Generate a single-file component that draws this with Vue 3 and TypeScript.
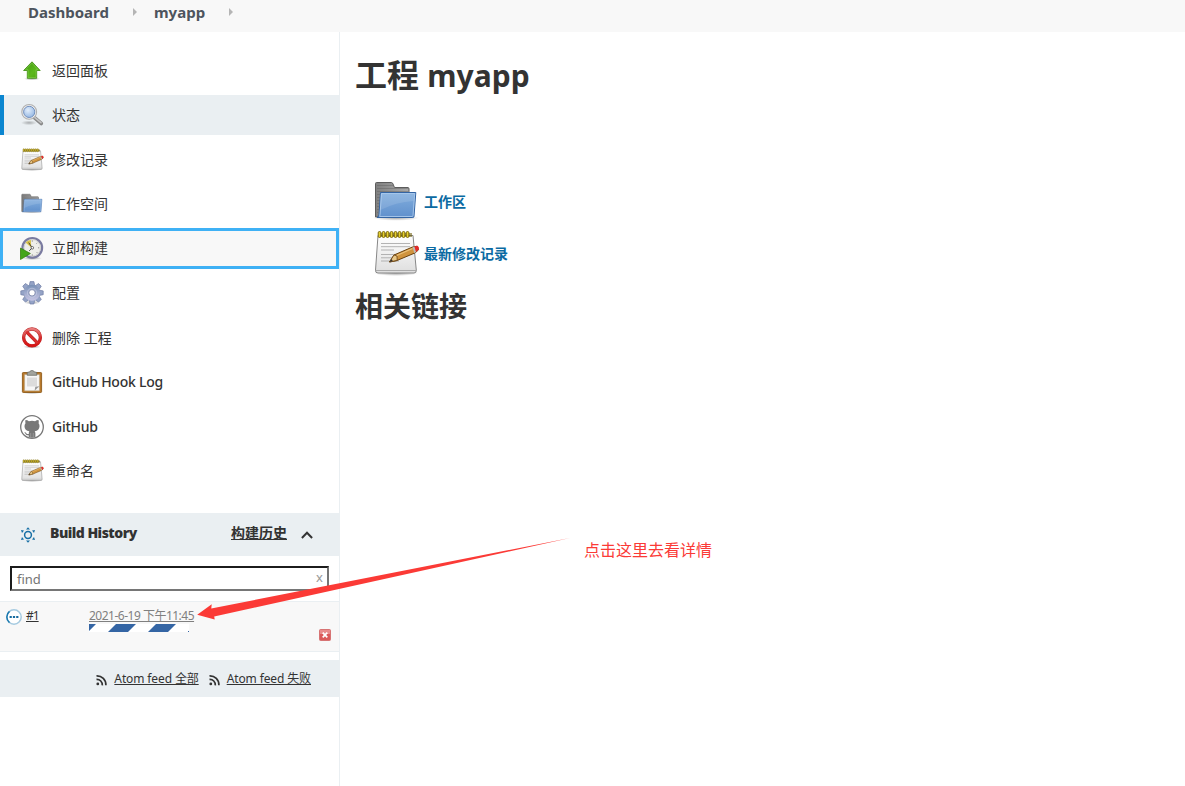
<script setup lang="ts">
interface Task {
  label: string
  icon: string
  state?: 'active' | 'focused'
  latin?: boolean
}

const crumbs: string[] = ['Dashboard', 'myapp']

const tasks: Task[] = [
  { label: '返回面板', icon: 'up' },
  { label: '状态', icon: 'search', state: 'active' },
  { label: '修改记录', icon: 'notepad' },
  { label: '工作空间', icon: 'folder' },
  { label: '立即构建', icon: 'clock', state: 'focused' },
  { label: '配置', icon: 'gear' },
  { label: '删除 工程', icon: 'delete' },
  { label: 'GitHub Hook Log', icon: 'clipboard', latin: true },
  { label: 'GitHub', icon: 'github', latin: true },
  { label: '重命名', icon: 'notepad' },
]

const links = [
  { label: '工作区', icon: 'folder' },
  { label: '最新修改记录', icon: 'notepad' },
]

const feeds: string[] = ['全部', '失败']
const teeth: number[] = [0, 45, 90, 135, 180, 225, 270, 315]
</script>

<template>
  <div class="page">
    <svg class="defs" aria-hidden="true">
      <defs>
        <linearGradient id="g-green" x1="0" y1="0" x2="1" y2="1">
          <stop offset="0" stop-color="#3f9a10" /><stop offset=".6" stop-color="#5cb81c" /><stop offset="1" stop-color="#4aa40d" />
        </linearGradient>
        <linearGradient id="g-blue" x1="0" y1="0" x2="0" y2="1">
          <stop offset="0" stop-color="#82aede" /><stop offset="1" stop-color="#6090cc" />
        </linearGradient>
        <linearGradient id="g-grey" x1="0" y1="0" x2="1" y2="0">
          <stop offset="0" stop-color="#808080" /><stop offset="1" stop-color="#aaa" />
        </linearGradient>
        <linearGradient id="g-paper" x1="0" y1="0" x2="0" y2="1">
          <stop offset="0" stop-color="#fff" /><stop offset="1" stop-color="#dedede" />
        </linearGradient>
        <linearGradient id="g-gear" x1="0" y1="0" x2="0" y2="1">
          <stop offset="0" stop-color="#7890b5" /><stop offset="1" stop-color="#c7c5e4" />
        </linearGradient>
        <linearGradient id="g-red" x1="0" y1="0" x2="0" y2="1">
          <stop offset="0" stop-color="#e87c7c" /><stop offset=".55" stop-color="#d42a2a" /><stop offset="1" stop-color="#d81414" />
        </linearGradient>
        <radialGradient id="g-lens" cx=".4" cy=".35" r=".7">
          <stop offset="0" stop-color="#e3eefb" /><stop offset="1" stop-color="#92b6e3" />
        </radialGradient>
        <radialGradient id="g-shadow">
          <stop offset="0" stop-color="#000" stop-opacity=".35" /><stop offset="1" stop-color="#000" stop-opacity="0" />
        </radialGradient>
      </defs>

      <symbol id="up" viewBox="0 0 24 24">
        <ellipse cx="12" cy="19.7" rx="8" ry="1.8" fill="url(#g-shadow)" />
        <path d="M12 2.8 20.2 11.5H16.7V19.3H7.3V11.5H3.6Z" fill="url(#g-green)" stroke="#3f8a12" stroke-width=".8" stroke-linejoin="round" />
        <path d="M12 4.2 18 10.7H16v7.8H8.1V10.7H5.5Z" fill="none" stroke="#8fd45c" stroke-width=".7" opacity=".7" />
      </symbol>

      <symbol id="search" viewBox="0 0 24 24">
        <ellipse cx="9" cy="19.8" rx="8" ry="2.4" fill="url(#g-shadow)" opacity=".8" />
        <path d="m14.4 14.6 6.8 5.8" stroke="#888" stroke-width="3.8" stroke-linecap="round" />
        <path d="m14.6 14.4 6.4 5.3" stroke="#c4c4c4" stroke-width="1.6" stroke-linecap="round" />
        <circle cx="9.2" cy="8.9" r="7.4" fill="#eee" stroke="#b0b0b0" stroke-width="1.1" />
        <circle cx="9.2" cy="8.9" r="5.6" fill="url(#g-lens)" stroke="#7390bd" stroke-width="1" />
      </symbol>

      <symbol id="notepad" viewBox="0 0 48 48">
        <ellipse cx="24" cy="43.3" rx="22" ry="2.7" fill="url(#g-shadow)" />
        <path d="M6 5.5H41L44.3 40.2Q44.5 43 42 43H6Q3.2 43 3.5 40.2Z" fill="url(#g-paper)" stroke="#878787" stroke-width="1" />
        <path d="M4 40.5H44" stroke="#aaa" stroke-width="1" />
        <path d="M9 13.5h29M9 16.7h29M9 20h13M9 24.5h29M9 27.8h21M9 31h18" stroke="#aaa" stroke-width=".9" />
        <path d="M7 3h33v4H7z" fill="#665500" opacity=".55" />
        <g fill="#e5cf31" stroke="#6e5b00" stroke-width=".9">
          <rect v-for="i in 8" :key="i" :x="2.2 + i * 4" y="1.5" width="2.7" height="6" rx="1.3" />
        </g>
        <path d="m17.5 32 4.5-7L40.5 17l4.7-.8 1.3 3.7-3.4 3L24.5 30.7Z" fill="#d0943e" stroke="#6b4310" stroke-width="1" stroke-linejoin="round" />
        <path d="m22.5 26.4 18-8" stroke="#ecc47e" stroke-width="1.1" />
        <path d="m17.5 32 4.5-7 3 1 .2 4.3Z" fill="#e8c788" stroke="#6b4310" stroke-width=".8" />
        <path d="m17.5 32 2-3 1.3 2Z" fill="#333" />
        <path d="m40.6 17 1.6 5.9 2-.9-1.6-5.5Z" fill="#bbb" />
        <path d="m42.4 16.5 2.8-.8q2.2.9 1.7 3.6l-2.8 2.7Z" fill="#e32b2b" />
      </symbol>

      <symbol id="folder" viewBox="0 0 48 48">
        <ellipse cx="24" cy="39.8" rx="23" ry="3" fill="url(#g-shadow)" />
        <path d="M3.5 39V5.5Q3.5 4.5 4.5 4.5H19.5Q20.5 4.5 21 6L22.5 9.5H36Q37 9.5 37 11V38Z" fill="url(#g-grey)" stroke="#5c5c5c" stroke-width="1" />
        <path d="M5 7.5h16M5 10.5h31M5 13.5h31M5 16.5h3M5 19.5h3M5 22.5h3M5 25.5h3M5 28.5h2M5 31.5h2M5 34.5h1" stroke="#5c5c5c" stroke-width=".8" opacity=".5" />
        <path d="M8.5 14.5H43.8L42 38.5Q41.9 39.5 40.8 39.5H5Q6.8 39 7 36.5Z" fill="url(#g-blue)" stroke="#3465a4" stroke-width="1" />
        <path d="M9.4 15.5H42.7L41 37.5Q40.9 38.5 40 38.5H7.7Q8 37 8.1 36Z" fill="none" stroke="#a9c8eb" stroke-width=".9" />
        <path d="M9 16H42L41.5 23Q24 24 8.4 32Z" fill="#fff" opacity=".12" />
      </symbol>

      <symbol id="clock" viewBox="0 0 24 24">
        <ellipse cx="12" cy="22.3" rx="10" ry="1.7" fill="url(#g-shadow)" />
        <circle cx="12.3" cy="11.8" r="9.8" fill="#eeeeea" stroke="#7a7ba0" stroke-width="2.2" />
        <circle cx="12.3" cy="11.8" r="8.2" fill="none" stroke="#c9c9c4" stroke-width=".7" />
        <path d="M11.2 11.5 5.5 6.5Q7.7 3.9 10.9 3.9Z" fill="#d8c34c" />
        <path d="m8.7 6.6 3.5 5.2-3 3.1" fill="none" stroke="#333" stroke-width=".9" />
        <circle cx="12.3" cy="11.8" r="1.3" fill="#fff" stroke="#333" stroke-width=".7" />
        <path d="M12.3 4.5v1M19.2 11.8h-1M12.3 18.5v1M17.2 6.9l-.6.6M17.2 16.7l-.6-.6" stroke="#555" stroke-width=".8" />
        <path d="M.5 12.1 10.4 17.5 .5 23.5Z" fill="#44a51b" stroke="#37830f" stroke-width=".8" stroke-linejoin="round" />
      </symbol>

      <symbol id="gear" viewBox="0 0 24 24">
        <ellipse cx="12" cy="21.5" rx="8" ry="2" fill="url(#g-shadow)" />
        <g fill="#94a3c6" stroke="#707da5" stroke-width=".7" stroke-linejoin="round">
          <path v-for="a in teeth" :key="a" d="M9.2 5.2 10.1.6h3.8L14.8 5.2Z" :transform="`rotate(${a} 12 11.8)`" />
        </g>
        <path fill-rule="evenodd" d="M12 3.8a8 8 0 1 1 0 16A8 8 0 0 1 12 3.8Zm0 4.9a3.1 3.1 0 1 0 0 6.2 3.1 3.1 0 0 0 0-6.2Z" fill="url(#g-gear)" />
        <circle cx="12" cy="11.8" r="3.2" fill="#fff" stroke="#727da5" stroke-width=".8" />
        <circle cx="12" cy="11.8" r="4.6" fill="none" stroke="#c4cbe3" stroke-width=".7" />
      </symbol>

      <symbol id="delete" viewBox="0 0 24 24">
        <ellipse cx="12" cy="20.8" rx="9" ry="1.8" fill="url(#g-shadow)" />
        <circle cx="12" cy="11.4" r="8.4" fill="#fff" stroke="#b92626" stroke-width="3.3" />
        <path d="m6.3 5.7 11.4 11.4" stroke="#b41515" stroke-width="3.2" />
        <circle cx="12" cy="11.4" r="8.4" fill="none" stroke="url(#g-red)" stroke-width="2.5" />
        <path d="m6.3 5.7 11.4 11.4" stroke="#d83030" stroke-width="2.5" />
      </symbol>

      <symbol id="clipboard" viewBox="0 0 24 24">
        <ellipse cx="12" cy="22.8" rx="10" ry="1.2" fill="url(#g-shadow)" />
        <rect x="2.4" y="2.5" width="19.2" height="20" rx=".8" fill="#b8792b" stroke="#86520f" stroke-width=".8" />
        <path d="M4.6 4.6H19.4V20.8H4.6Z" fill="#f7f7f7" stroke="#b9a98c" stroke-width=".5" />
        <path d="M7 7.5h10v9H7z" fill="#dcdcdc" />
        <path d="m14.6 20.8.7-4 4.1-.6Z" fill="#999" />
        <path d="M7.2 5.3V3q0-.9 1-.9h1.2Q10 .5 12 .5t2.6 1.6h1.2q1 0 1 .9v2.3Z" fill="#a2a49e" stroke="#62645e" stroke-width=".7" />
      </symbol>

      <symbol id="github" viewBox="0 0 24 24">
        <circle cx="12" cy="12" r="11.3" fill="#fff" stroke="#787878" stroke-width="1.3" />
        <path d="M5.5 5.1Q7.2 5 8.9 6.3Q12 5.4 15.1 6.3Q16.8 5 18.5 5.1Q19.1 6.8 18.6 8.2Q19.7 9.5 19.5 11.5Q19.3 15.5 14.7 16.2Q15.4 17 15.4 18.2V22.2Q12 23.5 8.7 22.2V20.3Q6.2 20.7 5.4 18.8Q5 17.8 4.2 17.3Q5.8 17 6.5 18.5Q7.2 19.4 8.8 18.9Q8.7 17.1 9.3 16.2Q4.7 15.5 4.5 11.5Q4.4 9.5 5.5 8.2Q5 6.8 5.5 5.1Z" fill="#787878" />
        <path d="M10.7 18v4.8M13.3 18v4.8" stroke="#aaa" stroke-width=".6" />
      </symbol>

      <symbol id="rss" viewBox="0 0 12 12">
        <g fill="none" stroke="#333" stroke-width="1.7">
          <path d="M.5 1.8A9 9 0 0 1 9.9 11.3M.5 5.3A5.5 5.5 0 0 1 6.3 11.3" />
        </g>
        <circle cx="1.8" cy="9.9" r="1.4" fill="#333" />
      </symbol>
    </svg>

    <header class="crumbs">
      <template v-for="crumb in crumbs" :key="crumb">
        <span class="crumb">{{ crumb }}</span>
        <svg class="sep" viewBox="0 0 4 8"><path d="M0 0 4 4 0 8Z" fill="#b5b5b5" /></svg>
      </template>
    </header>

    <div class="body">
      <aside class="side">
        <nav class="tasks">
          <a v-for="task in tasks" :key="task.label" class="task" :class="[task.state, { latin: task.latin }]">
            <svg class="icon"><use :href="`#${task.icon}`" /></svg>
            <span>{{ task.label }}</span>
          </a>
        </nav>

        <section class="history">
          <div class="history-head">
            <svg class="sun" viewBox="0 0 16 16">
              <circle cx="8" cy="8" r="3.4" fill="none" stroke="#176fa5" stroke-width="1.5" />
              <path d="m8 .2 2 2.3H6ZM8 15.8 6 13.5h4ZM1 3l3 .5-2 2.6ZM15 3l-3 .5 2 2.6ZM1 13l3-.5-2-2.6ZM15 13l-3-.5 2-2.6Z" fill="#176fa5" />
            </svg>
            <b class="history-title">Build History</b>
            <a class="trend">构建历史</a>
            <svg class="chevron" viewBox="0 0 12 8"><path d="m.9 7 5.1-5.2L11.1 7" fill="none" stroke="#333" stroke-width="2" /></svg>
          </div>
          <div class="find">
            <span>find</span>
            <span class="clear">x</span>
          </div>
          <div class="build">
            <svg class="ball" viewBox="0 0 16 16">
              <circle cx="8" cy="8" r="7.2" fill="#fff" stroke="#a5cae0" stroke-width="1.5" />
              <path d="M3.5 13.6A7.2 7.2 0 0 1 3.5 2.4" fill="none" stroke="#1978ae" stroke-width="1.5" />
              <path d="M3.6 7h2.2v2H3.6zM6.9 7h2.2v2H6.9zM10.2 7h2.2v2h-2.2z" fill="#176b9f" />
            </svg>
            <div class="number"><a>#1</a></div>
            <div class="when">
              <a class="date">2021-6-19 下午11:45</a>
              <svg class="progress" viewBox="0 0 100 8">
                <path d="M0 0h100v8H0z" fill="#fff" />
                <path d="M0 0H7L0 7ZM27 0H47L39 8H19ZM67 0H87L79 8H59ZM99 7h1v1h-1z" fill="#3465a4" />
              </svg>
            </div>
            <svg class="stop" viewBox="0 0 12 12">
              <rect x=".5" y=".5" width="11" height="11" rx="1" fill="#db5a5a" stroke="#d77474" />
              <path d="M1 1h10v4H1z" fill="#e98b8b" />
              <path d="m3.7 3.7 4.6 4.6m0-4.6L3.7 8.3" stroke="#fff" stroke-width="1.7" />
            </svg>
          </div>
          <div class="feeds">
            <span v-for="feed in feeds" :key="feed" class="feed">
              <svg class="rss"><use href="#rss" /></svg>
              <a>Atom feed {{ feed }}</a>
            </span>
          </div>
        </section>
      </aside>

      <main class="main">
        <h1>工程 <span>myapp</span></h1>
        <div class="links">
          <a v-for="link in links" :key="link.label" class="link">
            <svg class="icon-lg"><use :href="`#${link.icon}`" /></svg>
            <span>{{ link.label }}</span>
          </a>
        </div>
        <h2>相关链接</h2>
      </main>
    </div>

    <svg class="pointer" viewBox="0 0 380 100">
      <path d="M390 8 31.3 78.4 31.7 74.2 17.2 84.7 34.7 89.6 34.2 86.4Z" fill="#fb3a36" />
    </svg>
    <div class="note">点击这里去看详情</div>
  </div>
</template>

<style>
body {
  margin: 0;
  background: #fff;
}
</style>

<style scoped>
.page {
  position: relative;
  height: 786px;
  overflow: hidden;
  display: flex;
  flex-direction: column;
  color: #333;
  font: 14px/20px "Noto Sans", "Noto Sans CJK SC", sans-serif;
}
.defs {
  position: absolute;
  width: 0;
  height: 0;
}
svg {
  display: block;
  flex: none;
}
.crumbs {
  height: 32px;
  flex: none;
  box-sizing: border-box;
  padding: 2px 0 0 28px;
  display: flex;
  background: #f8f8f8;
  color: #4d545d;
  font-weight: 700;
  font-size: 15px;
}
.sep {
  width: 4px;
  height: 8px;
  margin: 6px 17px 0 24px;
}
.body {
  display: flex;
  flex: 1;
}
.side {
  width: 339px;
  flex: none;
  border-right: 1px solid #eaeff2;
}
.tasks {
  display: flex;
  flex-direction: column;
  gap: 4.5px;
  padding-top: 18.5px;
}
.task {
  height: 40px;
  box-sizing: border-box;
  padding-left: 20px;
  display: flex;
  align-items: center;
  gap: 8px;
}
.task.latin {
  font-weight: 500;
  letter-spacing: -0.25px;
}
.task.active {
  background: #eaeff2;
  border-left: 4px solid #0b86d0;
  padding-left: 16px;
}
.task.focused {
  height: 41px;
  margin: -1px 0 0;
  background: #f8f8f8;
  border: 3px solid #3fb1f5;
  padding-left: 17px;
}
.icon {
  width: 24px;
  height: 24px;
}
.history {
  margin-top: 22px;
}
.history-head {
  height: 43px;
  box-sizing: border-box;
  display: flex;
  align-items: center;
  padding: 0 26px 3px 20px;
  background: #eaeff2;
  font-weight: 700;
}
.history-title {
  letter-spacing: -0.52px;
}
.sun {
  width: 16px;
  height: 16px;
  margin: 4px 14px 0 0;
}
.trend {
  margin-left: auto;
  text-decoration: underline;
}
.chevron {
  width: 12px;
  height: 8px;
  margin: 3px 0 0 14px;
}
.find {
  height: 25px;
  margin: 10px 10px 10px;
  box-sizing: border-box;
  border: 2px solid #767676;
  border-top-color: #1c1c1c;
  border-left-color: #1c1c1c;
  padding: 0 4px 0 5px;
  display: flex;
  justify-content: space-between;
  align-items: center;
  color: #757575;
  font-size: 13px;
}
.clear {
  color: #999;
  margin-top: -3px;
}
.build {
  height: 51px;
  box-sizing: border-box;
  border-top: 1px solid #eaeff2;
  border-bottom: 1px solid #eaeff2;
  background: #f8f8f8;
  display: flex;
  padding: 4px 8px 0 6px;
  font-size: 12px;
}
.ball {
  width: 16px;
  height: 16px;
  margin-top: 3px;
}
.number {
  width: 63px;
  margin-left: 4px;
  letter-spacing: -1px;
  text-decoration: underline;
}
.when {
  width: 110px;
}
.date {
  display: block;
  width: max-content;
  height: 18px;
  color: #808080;
  letter-spacing: -0.5px;
  text-decoration: underline;
  white-space: nowrap;
}
.progress {
  width: 100px;
  height: 8px;
}
.stop {
  width: 12px;
  height: 12px;
  margin: 23px 0 0 auto;
}
.feeds {
  height: 37px;
  margin-top: 8px;
  display: flex;
  align-items: center;
  justify-content: flex-end;
  gap: 10px;
  padding-right: 28px;
  background: #eaeff2;
  font-size: 12px;
}
.feed {
  display: flex;
  align-items: center;
  gap: 6px;
}
.feed a {
  letter-spacing: -0.12px;
  text-decoration: underline;
}
.rss {
  width: 12px;
  height: 12px;
  margin-top: 3px;
}
.main {
  flex: 1;
  padding: 23px 0 0 15px;
}
h1 {
  margin: 0;
  font-size: 32px;
  line-height: 40px;
}
h1 span {
  font-size: 30px;
}
.links {
  margin: 82px 0 0 17px;
  display: flex;
  flex-direction: column;
  gap: 4px;
}
.link {
  display: flex;
  align-items: center;
  gap: 4px;
  color: #0b6aa2;
  font-weight: 700;
}
.icon-lg {
  width: 48px;
  height: 48px;
}
h2 {
  margin: 8px 0 0;
  font-size: 28px;
  line-height: 40px;
}
.pointer {
  position: absolute;
  left: 180px;
  top: 530px;
  width: 380px;
  height: 100px;
  overflow: visible;
}
.note {
  position: absolute;
  left: 584px;
  top: 540px;
  color: #fb3a36;
  font-size: 16px;
}
</style>
